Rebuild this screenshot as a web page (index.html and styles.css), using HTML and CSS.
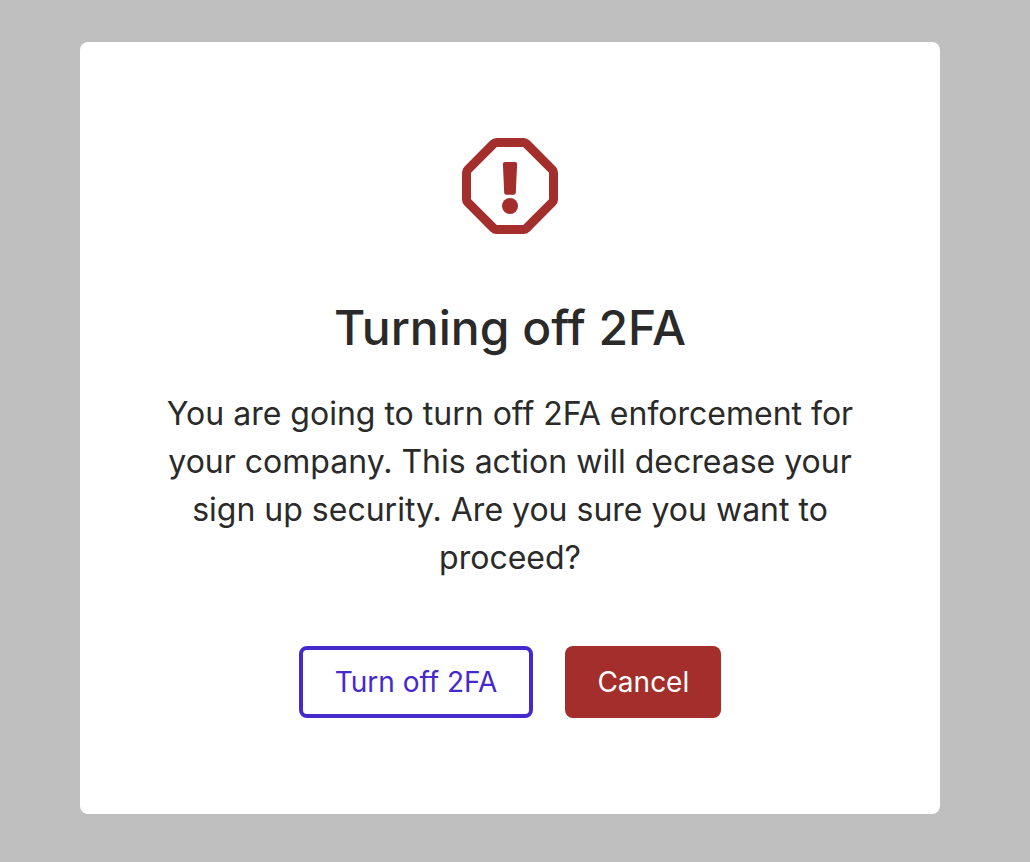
FILE: index.html
```html
<!DOCTYPE html>
<html lang="en">
<head>
<meta charset="utf-8">
<meta name="viewport" content="width=device-width, initial-scale=1">
<title>Turning off 2FA</title>
<link rel="stylesheet" href="styles.css">
</head>
<body>
<main class="dialog" role="alertdialog" aria-labelledby="title" aria-describedby="message">
  <svg class="icon" viewBox="0 0 96 96" aria-hidden="true">
    <path d="M34.5 0H61.5Q65 0 67.600 2.600L93.400 28.400Q96 31 96 34.500V61.500Q96 65 93.400 67.600L67.600 93.400Q65 96 61.500 96H34.500Q31 96 28.400 93.400L2.600 67.600Q0 65 0 61.500V34.500Q0 31 2.600 28.400L28.400 2.600Q31 0 34.500 0ZM34.800 9L9 34.800V61.200L34.800 87H61.200L87 61.200V34.800L61.200 9Z" fill="currentColor" fill-rule="evenodd"/>
    <path d="M43 24h10q2.200 0 2.100 2.300l-1.300 28.400q-.1 2-2.100 2h-7.400q-2 0-2.100-2L40.900 26.300q-.1-2.300 2.100-2.300z" fill="currentColor"/>
    <circle cx="48" cy="68" r="8" fill="currentColor"/>
  </svg>
  <h1 class="title" id="title">Turning off 2FA</h1>
  <p class="message" id="message">You are going to turn off 2FA enforcement for your company. This action will decrease your sign up security. Are you sure you want to proceed?</p>
  <div class="actions">
    <button class="button button-outline" type="button">Turn off 2FA</button>
    <button class="button button-danger" type="button">Cancel</button>
  </div>
</main>
</body>
</html>
```
FILE: styles.css
```css
* {
  box-sizing: border-box;
}

body {
  margin: 0;
  min-height: 100vh;
  padding: 42px 90px 48px 80px;
  background: #bfbfbf;
  color: #2a2a2a;
  font-family: Inter, "Liberation Sans", sans-serif;
  font-variant-ligatures: none;
}

.dialog {
  display: flex;
  flex-direction: column;
  align-items: center;
  padding: 96px 80px;
  border-radius: 8px;
  background: #fff;
  text-align: center;
}

.icon {
  width: 96px;
  height: 96px;
  color: #a32e2b;
}

.title {
  margin: 64px 0 32px;
  font-size: 48px;
  line-height: 60px;
  font-weight: 500;
}

.message {
  margin: 0;
  font-size: 32px;
  line-height: 48px;
}

.actions {
  display: flex;
  gap: 32px;
  margin-top: 64px;
}

.button {
  border: 0;
  border-radius: 8px;
  font-family: inherit;
  font-variant-ligatures: none;
  font-size: 28px;
  line-height: 32px;
}

.button-outline {
  padding: 16px 32px;
  border: 4px solid #4629cc;
  background: #fff;
  color: #4629cc;
}

.button-danger {
  padding: 20px 32px;
  background: #a32e2b;
  color: #fff;
}
```
